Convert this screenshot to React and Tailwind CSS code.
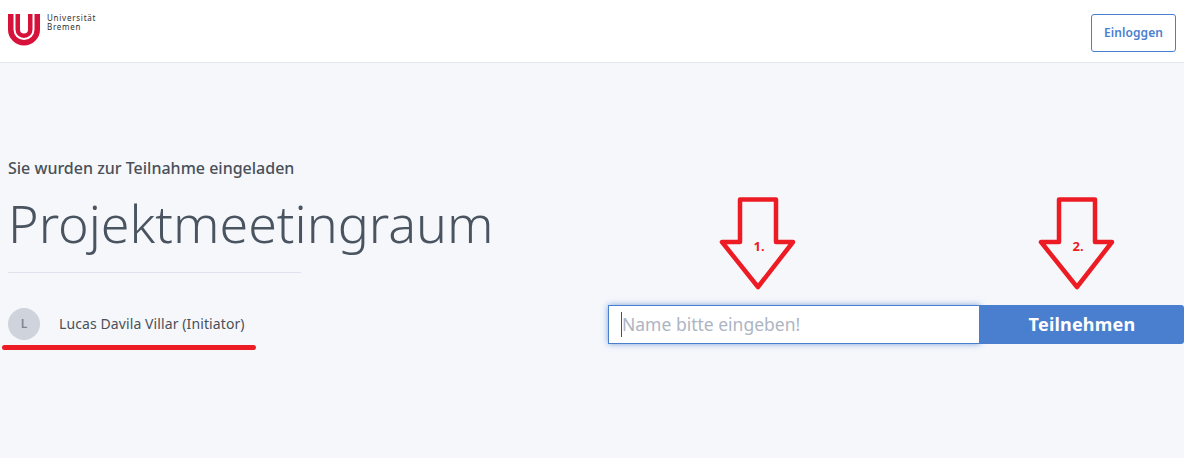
// App.jsx
// Meeting invitation page with red hand-drawn annotations on top

function Logo() {
  return (
    <svg width="32" height="32" viewBox="0 0 32 32" className="block">
      <path d="M0 0H5.5V15.5A10.5 10.5 0 0 0 26.5 15.5V0H32V15.5A16 16 0 0 1 0 15.5Z" fill="#d6123a" />
      <path d="M7.5 0H12V15.5A4 4 0 0 0 20 15.5V0H24.5V15.5A8.5 8.5 0 0 1 7.5 15.5Z" fill="#d6123a" />
    </svg>
  );
}

function Arrow({ label }) {
  return (
    <svg width="78" height="98" viewBox="0 0 78 98" className="block">
      <path
        d="M21 4.5H57V47H74L39 92L3 47H21Z"
        fill="none"
        stroke="#ed1c24"
        strokeWidth="4.5"
        strokeLinejoin="round"
      />
      <text x="40" y="56" textAnchor="middle" fontSize="13" fontWeight="700" fill="#ed1c24" fontFamily="'Noto Sans', sans-serif">
        {label}
      </text>
    </svg>
  );
}

export default function App() {
  return (
    <div className="h-[473px] bg-white font-['Noto_Sans',sans-serif] overflow-hidden">
      <div className="relative h-[458px] flex flex-col bg-[#f5f7fb]">
        {/* Header */}
        <header className="h-[63px] shrink-0 flex justify-between bg-white border-b border-[#e4e7f0] pl-2 pr-2">
          <div className="flex items-start gap-[7px] pt-[14px]">
            <Logo />
            <div className="-mt-px text-[8px] leading-[9px] text-[#2f2f2f] tracking-[0.75px]">
              <div>Universität</div>
              <div>Bremen</div>
            </div>
          </div>
          <button className="mt-[14px] w-[85px] h-[38px] rounded-[3px] border border-[#4a7fd0] bg-white text-[12px] font-semibold text-[#4a7fd0] tracking-[0.1px]">
            Einloggen
          </button>
        </header>

        {/* Main */}
        <main className="flex flex-1">
          <div className="w-[608px] shrink-0 pl-2 pt-[95px]">
            <p className="text-[16px] leading-5 font-medium text-[#4a5058]">Sie wurden zur Teilnahme eingeladen</p>
            <h1 className="mt-[13px] text-[52px] leading-[64px] font-light text-[#4a5460]">Projektmeetingraum</h1>
            <div className="mt-[17px] w-[293px] border-t border-[#dfe1ec]" />
            <div className="mt-[35px] flex items-center gap-[19px]">
              <div className="w-8 h-8 rounded-full bg-[#cfd4dc] flex items-center justify-center text-[12px] font-semibold text-[#7b8490]">
                L
              </div>
              <span className="-mt-px text-[14px] tracking-[0.1px] text-[#4a5058]">Lucas Davila Villar (Initiator)</span>
            </div>
          </div>

          <div className="flex-1 flex items-start pt-[242px]">
            <div className="w-[372px] h-[39px] bg-white border border-[#4a7fd0] shadow-[0_0_6px_rgba(74,127,208,0.7)] flex items-center pl-3">
              <span className="w-px h-[25px] bg-[#4a5058]" />
              <span className="-mt-px text-[17.5px] text-[#adb5c2]">Name bitte eingeben!</span>
            </div>
            <button className="flex-1 h-[39px] rounded-r-[3px] bg-[#4a7fd0] text-[18px] font-bold text-white tracking-[0.2px]">
              Teilnehmen
            </button>
          </div>
        </main>

        {/* Annotations */}
        <div className="absolute left-[719px] top-[195px]"><Arrow label="1." /></div>
        <div className="absolute left-[1038px] top-[195px]"><Arrow label="2." /></div>
        <div className="absolute left-[2px] top-[345px] w-[254px] h-[5px] rounded-full bg-[#ed1c24]" />
      </div>
    </div>
  );
}
